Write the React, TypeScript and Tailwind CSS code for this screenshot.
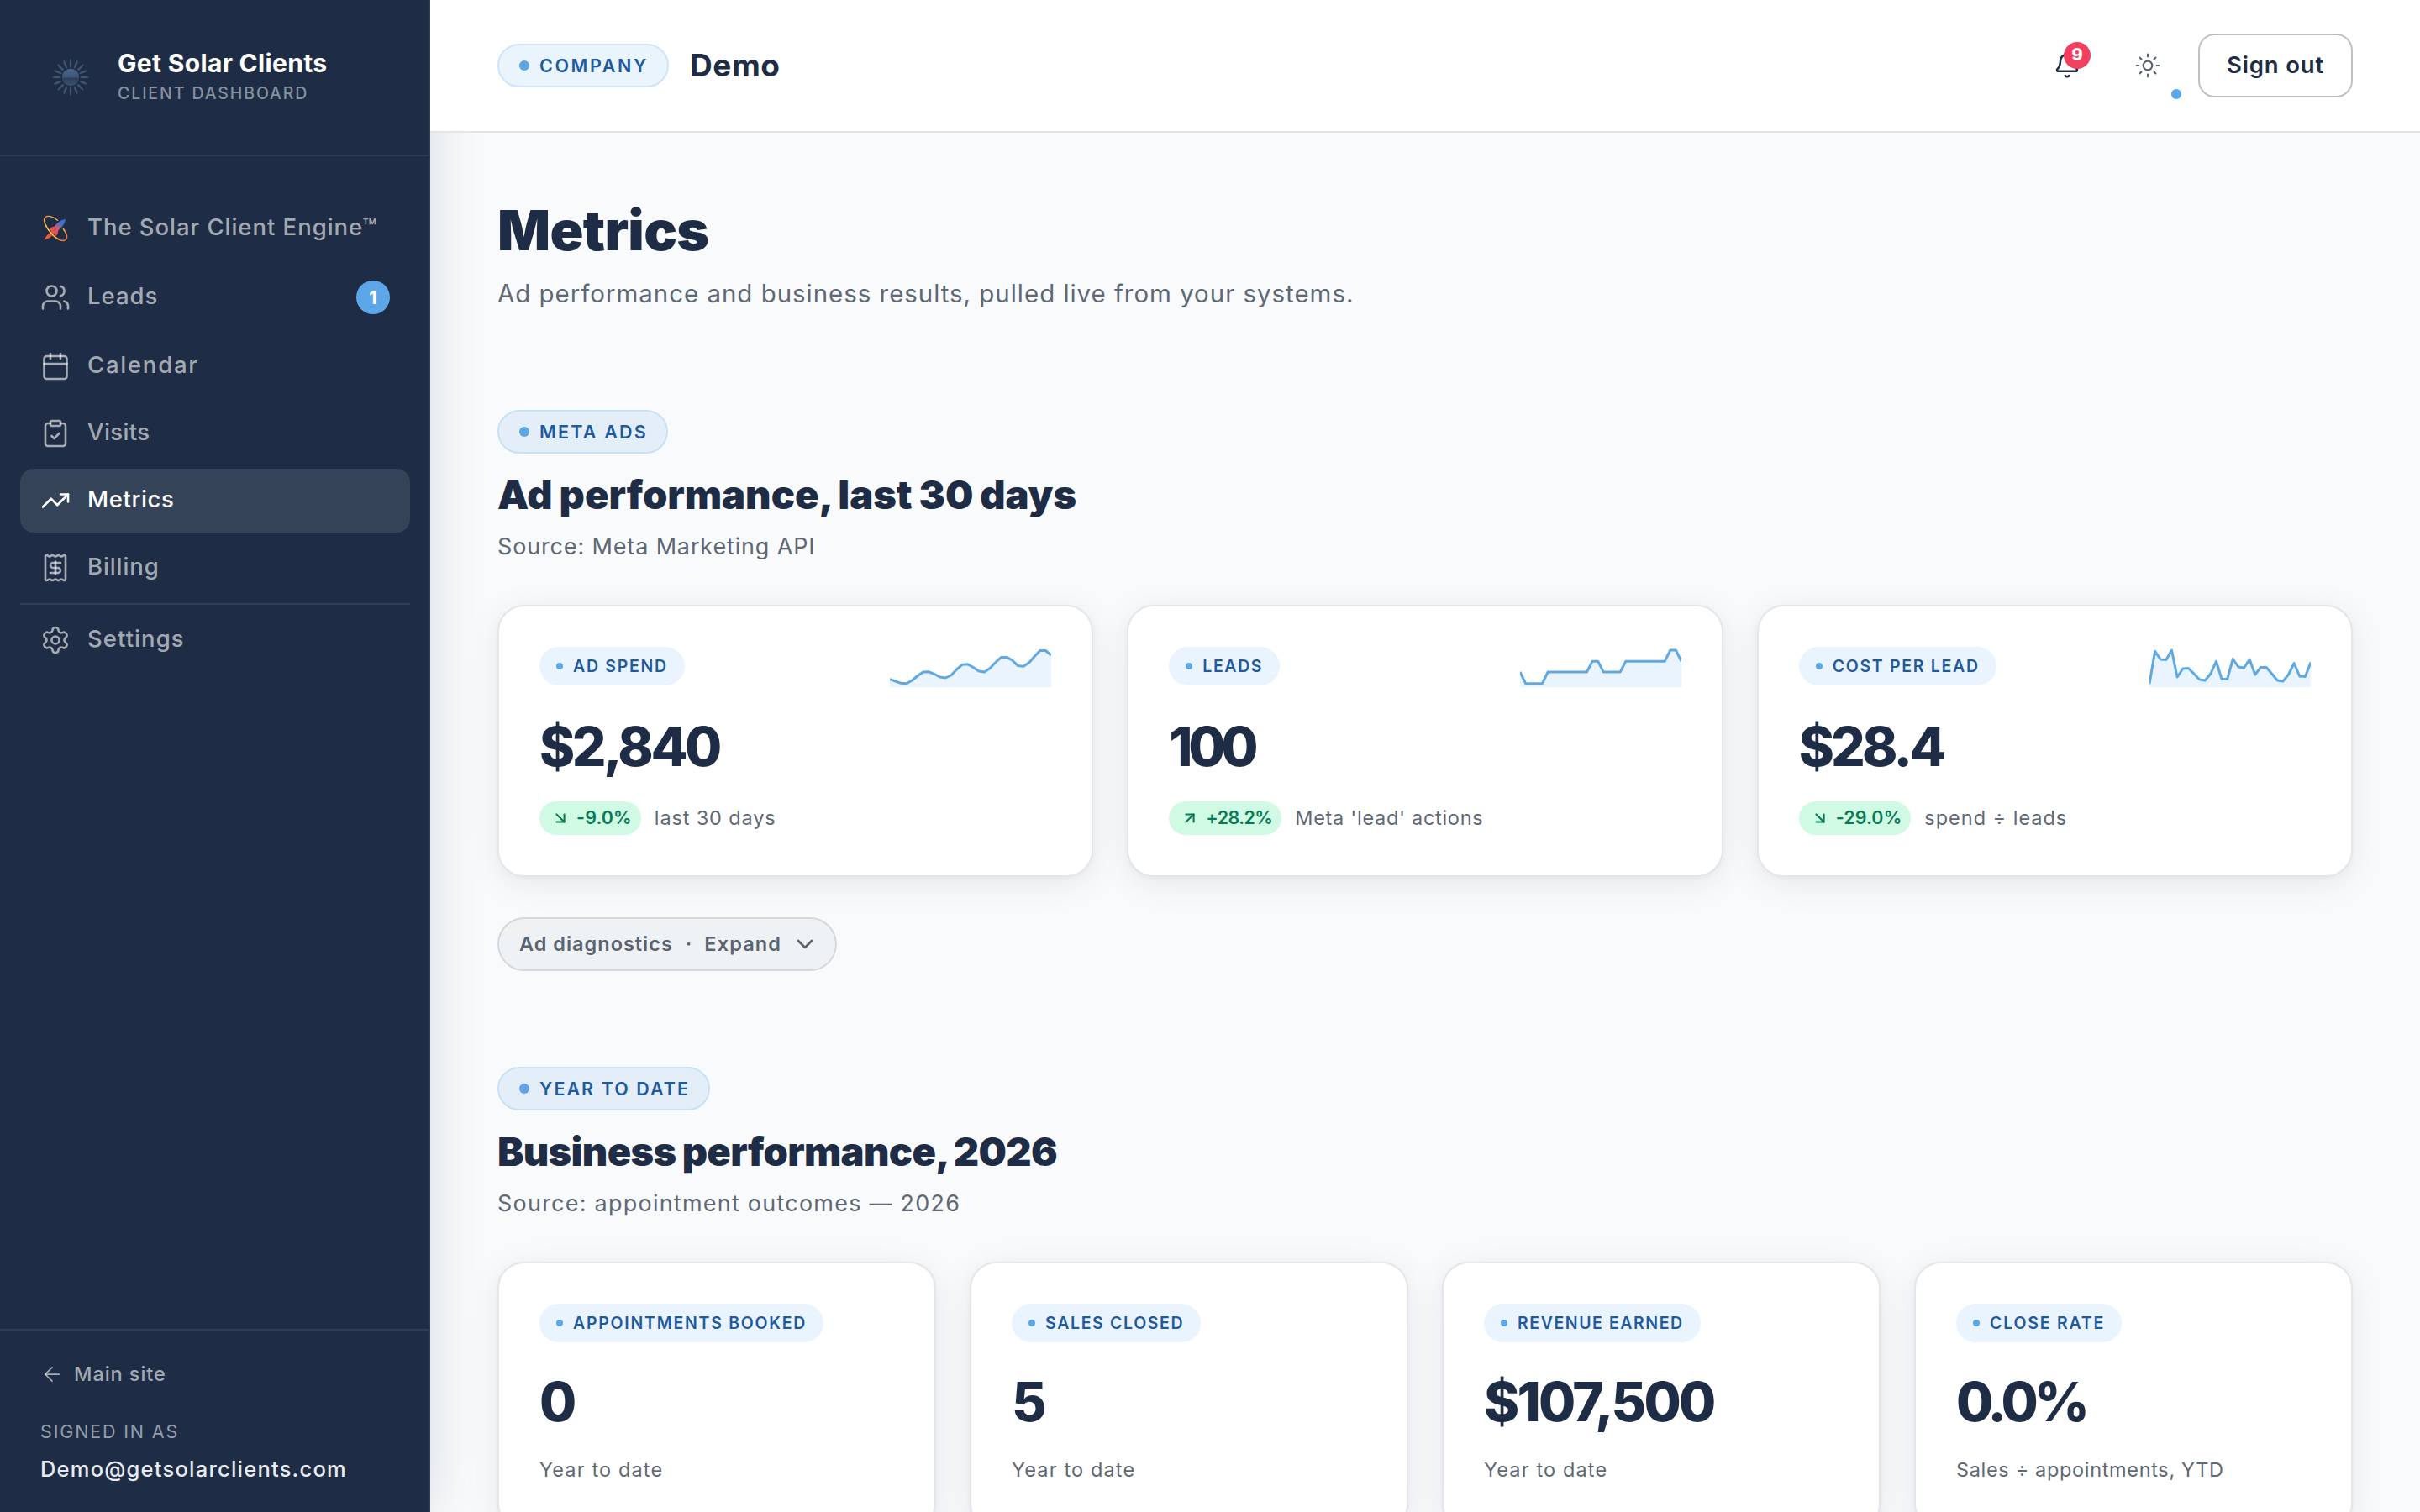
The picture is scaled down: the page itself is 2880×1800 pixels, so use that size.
import React from "react";
import {
  ArrowDownRight,
  ArrowLeft,
  ArrowUpRight,
  Bell,
  Calendar,
  ChevronDown,
  ClipboardCheck,
  Settings,
  Sun,
  TrendingUp,
  Users,
} from "lucide-react";

const spendTrend = [
  38.6, 41, 43.3, 43.7, 40, 34.5, 30, 29.8, 32.5, 36, 37, 34, 27, 21.3, 20.8, 24.5, 29, 30, 25.6, 18.5, 12.6, 12.4, 16,
  22.5, 23.2, 19, 11.5, 4.5, 4.5, 10,
];
const leadsTrend = [
  30, 43.7, 43.7, 43.7, 43.7, 30, 30, 30, 30, 30, 30, 30, 30, 17.3, 17.3, 30, 30, 30, 30, 17.3, 17.3, 17.3, 17.3, 17.3,
  17.3, 17.3, 17.3, 4, 4, 17.3,
];
const costTrend = [
  44, 5.3, 15, 15.5, 4, 36, 26, 25.5, 32, 39, 40, 32, 17.3, 38.5, 38.5, 14.5, 24, 25, 15, 33, 24.5, 24.5, 32, 40, 41, 33,
  19.5, 35, 35.5, 18.5,
];

function SunLogo() {
  return (
    <svg viewBox="0 0 48 48" className="mt-[13px] size-12 shrink-0">
      <defs>
        <linearGradient id="sunCore" x1="0" y1="0" x2="0" y2="1">
          <stop offset="0" stopColor="#4a6488" />
          <stop offset="0.48" stopColor="#3f587a" />
          <stop offset="0.56" stopColor="#2c405d" />
          <stop offset="1" stopColor="#3a5070" />
        </linearGradient>
      </defs>
      {Array.from({ length: 16 }, (_, i) => (
        <path
          key={i}
          d="M23.2 12.4 Q21.8 6.5 24 1.2 Q26.2 6.5 24.8 12.4 Z"
          fill="#42556f"
          transform={`rotate(${i * 22.5} 24 24)`}
        />
      ))}
      <circle cx="24" cy="24" r="10.2" fill="url(#sunCore)" />
    </svg>
  );
}

function RocketIcon() {
  return (
    <svg viewBox="0 0 36 36" className="size-9 shrink-0" fill="none">
      <defs>
        <linearGradient id="ring" x1="6" y1="4" x2="31" y2="33" gradientUnits="userSpaceOnUse">
          <stop offset="0" stopColor="#f6a63c" />
          <stop offset="0.5" stopColor="#fbc14a" />
          <stop offset="1" stopColor="#f0682f" />
        </linearGradient>
        <linearGradient id="hull" x1="30" y1="6" x2="10" y2="27" gradientUnits="userSpaceOnUse">
          <stop offset="0" stopColor="#1f74d8" />
          <stop offset="0.3" stopColor="#4a6fc4" />
          <stop offset="0.55" stopColor="#d9586a" />
          <stop offset="1" stopColor="#ee4a2c" />
        </linearGradient>
      </defs>
      <path d="M20.5 8.2 C15 3.200 8 2 5.600 5 C3.800 7.500 5 12 7.200 15.500" stroke="url(#ring)" strokeWidth="1.400" strokeLinecap="round" />
      <path d="M30 7 C25 7.500 20.500 10.500 17 15.500 L12.500 16.800 L9.500 21 L13.200 20.800 L12.300 22.600 L15.200 25.200 L16.900 24.200 L17 28 L20.500 24.800 L21.500 20 C26 16.500 29.300 12.500 30 7 Z" fill="url(#hull)" />
      <path d="M11.500 23.500 C8.500 24.500 6.800 27.500 4.500 31.500 C8.500 30.500 12.500 29 14 26 Z" fill="#ee5a35" />
      <path d="M5.500 12.500 C9 20.500 17 29.500 24.500 32 C30 33.600 32.300 30.500 31.200 25.800 C30.400 22.800 29 20.800 27.500 18.800" stroke="url(#ring)" strokeWidth="1.700" strokeLinecap="round" />
    </svg>
  );
}

function ReceiptIcon() {
  return (
    <svg viewBox="0 0 24 24" className="size-9 shrink-0" fill="none" stroke="currentColor" strokeWidth="1.75" strokeLinecap="round" strokeLinejoin="round">
      <path d="M12 17V7" />
      <path d="M16 8h-6a2 2 0 0 0 0 4h4a2 2 0 0 1 0 4H8" />
      <path d="M4 3a1 1 0 0 1 1-1 1.3 1.3 0 0 1 .7.2l.933.6a1.3 1.3 0 0 0 1.4 0l.934-.6a1.3 1.3 0 0 1 1.4 0l.933.6a1.3 1.3 0 0 0 1.4 0l.933-.6a1.3 1.3 0 0 1 1.4 0l.934.6a1.3 1.3 0 0 0 1.4 0l.933-.6A1.3 1.3 0 0 1 19 2a1 1 0 0 1 1 1v18a1 1 0 0 1-1 1 1.3 1.3 0 0 1-.7-.2l-.933-.6a1.3 1.3 0 0 0-1.4 0l-.934.6a1.3 1.3 0 0 1-1.4 0l-.933-.6a1.3 1.3 0 0 0-1.4 0l-.933.6a1.3 1.3 0 0 1-1.4 0l-.934-.6a1.3 1.3 0 0 0-1.4 0l-.933.6a1.3 1.3 0 0 1-.7.2 1 1 0 0 1-1-1z" />
    </svg>
  );
}

type NavItemProps = {
  icon: React.ReactNode;
  label: string;
  spacing: string;
  active?: boolean;
  badge?: string;
};

function NavItem({ icon, label, spacing, active, badge }: NavItemProps) {
  return (
    <a
      className={`flex items-center rounded-[16px] px-6 ${badge ? "h-20" : "h-[76px]"} ${
        active ? "bg-[#344358] text-white" : "text-white/60"
      }`}
    >
      {icon}
      <span className={`ml-5 pb-1 text-[27.5px] font-medium leading-9 ${spacing}`}>{label}</span>
      {badge && (
        <span className="ml-auto flex size-10 items-center justify-center rounded-full bg-[#5ba7e8] text-[22px] font-extrabold leading-none text-white">
          {badge}
        </span>
      )}
    </a>
  );
}

function Sidebar() {
  return (
    <aside className="z-10 flex h-full w-[512px] shrink-0 flex-col border-r-2 border-[#2b3a52] bg-[#1e2d45] shadow-[0_0_64px_rgba(16,24,32,0.13)]">
      <div className="flex h-[186px] shrink-0 gap-8 border-b-2 border-[#2e3d55] pl-[60px] pt-[55px]">
        <SunLogo />
        <div>
          <div className="h-10 text-[30px] font-bold leading-10 tracking-[0.32px] text-white">Get Solar Clients</div>
          <div className="mt-0.5 text-[19.5px] font-medium leading-7 tracking-[1.9px] text-[#8590a0]">CLIENT DASHBOARD</div>
        </div>
      </div>
      <nav className="flex flex-col gap-1 pl-6 pr-[22px] pt-12">
        <NavItem icon={<RocketIcon />} label="The Solar Client Engine™" spacing="tracking-[0.96px]" />
        <NavItem icon={<Users className="size-9" strokeWidth={1.75} />} label="Leads" spacing="tracking-[1px]" badge="1" />
        <NavItem icon={<Calendar className="size-9" strokeWidth={1.75} />} label="Calendar" spacing="tracking-[1.75px]" />
        <NavItem icon={<ClipboardCheck className="size-9" strokeWidth={1.75} />} label="Visits" spacing="tracking-[0.4px]" />
        <NavItem icon={<TrendingUp className="size-9" strokeWidth={1.75} />} label="Metrics" spacing="tracking-[0.6px]" active />
        <NavItem icon={<ReceiptIcon />} label="Billing" spacing="tracking-[0.9px]" />
        <div className="h-0.5 bg-[#2f3f57]" />
        <NavItem icon={<Settings className="size-9" strokeWidth={1.75} />} label="Settings" spacing="tracking-[1.05px]" />
      </nav>
      <div className="mt-auto border-t-2 border-[#2e3d55] px-12 pb-[31px] pt-8">
        <a className="flex h-10 items-center gap-3 text-white/60">
          <ArrowLeft className="size-7" strokeWidth={1.5} />
          <span className="text-[23.5px] font-medium leading-10 tracking-[0.95px]">Main site</span>
        </a>
        <div className="mt-[33px] text-[21.5px] leading-[30px] tracking-[1.85px] text-[#939dab]">SIGNED IN AS</div>
        <div className="mt-2.5 text-[25.5px] font-medium leading-10 tracking-[1.22px] text-[#e8ebef]">
          Demo@getsolarclients.com
        </div>
      </div>
    </aside>
  );
}

function SectionPill({ label, spacing, tone }: { label: string; spacing: string; tone: string }) {
  return (
    <div className={`flex h-[52px] w-fit items-center gap-3 rounded-full border-2 pl-6 pr-[22px] ${tone}`}>
      <span className="size-3 rounded-full bg-[#5ba7e8]" />
      <span className={`pt-0.5 text-[21.5px] font-semibold leading-none text-[#1f5a9f] ${spacing}`}>{label}</span>
    </div>
  );
}

function CardPill({ label, spacing }: { label: string; spacing: string }) {
  return (
    <div className="flex h-[46px] w-fit items-center gap-3 rounded-full bg-[#e9f4fe] px-5">
      <span className="size-2 rounded-full bg-[#5ba7e8]" />
      <span className={`whitespace-nowrap pt-0.5 text-[19.5px] font-semibold leading-none text-[#1f5a9f] ${spacing}`}>
        {label}
      </span>
    </div>
  );
}

function Sparkline({ data }: { data: number[] }) {
  const line = data.map((y, i) => `${((i * 192) / (data.length - 1)).toFixed(2)},${y}`).join(" ");
  return (
    <svg viewBox="0 0 192 48" className="h-12 w-48 shrink-0" fill="none">
      <polygon points={`0,48 ${line} 192,48`} fill="#e9f4fe" />
      <polyline points={line} stroke="#5fa8e3" strokeWidth="3" strokeLinejoin="round" />
    </svg>
  );
}

const cardBox =
  "rounded-[32px] border-2 border-[#e4e7e9] bg-white p-12 shadow-[0_8px_40px_rgba(16,24,40,0.08),0_2px_6px_rgba(16,24,40,0.03)]";

type TrendCardProps = {
  label: string;
  labelSpacing: string;
  value: string;
  valueSpacing: string;
  delta: string;
  deltaSpacing: string;
  up?: boolean;
  note: string;
  noteSpacing: string;
  data: number[];
};

function TrendCard(p: TrendCardProps) {
  const Arrow = p.up ? ArrowUpRight : ArrowDownRight;
  return (
    <div className={cardBox}>
      <div className="flex h-12 items-start justify-between">
        <CardPill label={p.label} spacing={p.labelSpacing} />
        <Sparkline data={p.data} />
      </div>
      <div className={`mt-[39px] text-[64px] font-extrabold leading-none text-[#1e2d45] ${p.valueSpacing}`}>{p.value}</div>
      <div className="mt-[33px] flex h-10 items-center gap-4">
        <span className="flex h-10 items-center gap-2 rounded-full bg-[#d1fae5] pl-3.5 pr-[11px] text-[#067a55]">
          <Arrow className="size-[22px]" strokeWidth={2.25} />
          <span className={`text-[21.5px] font-semibold leading-none ${p.deltaSpacing}`}>{p.delta}</span>
        </span>
        <span className={`text-[23.5px] leading-none text-[#5f6875] ${p.noteSpacing}`}>{p.note}</span>
      </div>
    </div>
  );
}

type YearCardProps = {
  label: string;
  labelSpacing: string;
  value: string;
  valueSpacing: string;
  note: string;
  noteSpacing: string;
};

function YearCard(p: YearCardProps) {
  return (
    <div className={`${cardBox} h-80`}>
      <CardPill label={p.label} spacing={p.labelSpacing} />
      <div className={`mt-[39px] text-[64px] font-extrabold leading-none text-[#1e2d45] ${p.valueSpacing}`}>{p.value}</div>
      <div className={`mt-[29px] text-[23.5px] leading-10 text-[#5f6875] ${p.noteSpacing}`}>{p.note}</div>
    </div>
  );
}

function TopBar() {
  return (
    <header className="relative z-20 flex h-[158px] shrink-0 items-center border-b-2 border-[#e2e4e6] bg-white px-20">
      <SectionPill label="COMPANY" spacing="tracking-[2.62px]" tone="bg-[#e9f4fd] border-[#cfe4f8]" />
      <span className="ml-[25px] pb-0.5 text-[37px] font-bold leading-none tracking-[0.6px] text-[#1e2d45]">Demo</span>
      <div className="ml-auto flex items-center">
        <div className="relative flex size-16 items-center justify-center text-[#1e2d45]">
          <Bell className="size-8" strokeWidth={1.9} />
          <span className="absolute left-7 top-1 flex size-8 items-center justify-center rounded-full bg-[#f43f5e] pb-0.5 text-[20px] font-extrabold leading-none text-white">
            9
          </span>
        </div>
        <div className="relative ml-8 flex size-16 items-center justify-center text-[#58626f]">
          <Sun className="size-8" strokeWidth={1.6} />
          <span className="absolute -bottom-2 -right-2 size-3 rounded-full bg-[#5ba7e8]" />
        </div>
        <button className="ml-7 flex h-[76px] w-[184px] items-center justify-center rounded-[20px] border-2 border-[#bfc2c5] bg-white text-[27.5px] font-semibold leading-none tracking-[0.83px] text-[#1e2d45]">
          Sign out
        </button>
      </div>
    </header>
  );
}

export default function App() {
  return (
    <div className="flex h-[1800px] w-[2880px] overflow-hidden bg-[#f8fafc] font-['Inter',sans-serif]">
      <Sidebar />
      <div className="flex min-w-0 flex-1 flex-col">
        <TopBar />
        <main className="flex min-h-0 flex-1 flex-col overflow-hidden px-20">
          <h1 className="mt-[76px] shrink-0 text-[66px] font-black leading-[80px] tracking-[-0.7px] text-[#1e2d45]">Metrics</h1>
          <p className="mt-[11px] shrink-0 text-[29.5px] leading-[48px] tracking-[0.96px] text-[#5f6875]">
            Ad performance and business results, pulled live from your systems.
          </p>

          <section className="mt-[115px] shrink-0">
            <SectionPill label="META ADS" spacing="tracking-[2.2px]" tone="bg-[#e4eef9] border-[#c9e1f5]" />
            <h2 className="mt-[19px] text-[47px] font-black leading-[60px] tracking-[0px] text-[#1e2d45] [word-spacing:-1.5px]">
              Ad performance, last 30 days
            </h2>
            <p className="mt-3 text-[27px] leading-10 tracking-[0.85px] text-[#5f6875]">Source: Meta Marketing API</p>
            <div className="mt-[49px] grid grid-cols-3 gap-10">
              <TrendCard
                label="AD SPEND"
                labelSpacing="tracking-[1.7px]"
                value="$2,840"
                valueSpacing="tracking-[-3.44px]"
                delta="-9.0%"
                deltaSpacing="tracking-[0.13px]"
                note="last 30 days"
                noteSpacing="tracking-[0.86px]"
                data={spendTrend}
              />
              <TrendCard
                label="LEADS"
                labelSpacing="tracking-[1.6px]"
                value="100"
                valueSpacing="tracking-[-5.27px]"
                delta="+28.2%"
                deltaSpacing="tracking-[-0.6px]"
                up
                note="Meta 'lead' actions"
                noteSpacing="tracking-[0.7px]"
                data={leadsTrend}
              />
              <TrendCard
                label="COST PER LEAD"
                labelSpacing="tracking-[1.7px]"
                value="$28.4"
                valueSpacing="tracking-[-3.8px]"
                delta="-29.0%"
                deltaSpacing="tracking-[0.11px]"
                note="spend ÷ leads"
                noteSpacing="tracking-[0.98px]"
                data={costTrend}
              />
            </div>
            <button className="mt-12 flex h-16 items-center rounded-full border-2 border-[#d5d9dc] bg-[#eef2f5] pl-6 pr-5 text-[23.5px] font-semibold leading-none text-[#5a6471]">
              <span className="tracking-[0.99px]">Ad diagnostics</span>
              <span className="mx-[15px]">·</span>
              <span className="tracking-[1.13px]">Expand</span>
              <ChevronDown className="ml-3 size-8" strokeWidth={2} />
            </button>
          </section>

          <section className="mt-[114px] shrink-0">
            <SectionPill label="YEAR TO DATE" spacing="tracking-[2.04px]" tone="bg-[#e4eef9] border-[#c9e1f5]" />
            <h2 className="mt-[19px] text-[47px] font-black leading-[60px] tracking-[-0.66px] text-[#1e2d45] [word-spacing:-1.5px]">
              Business performance, 2026
            </h2>
            <p className="mt-3 text-[27px] leading-10 tracking-[1.23px] text-[#5f6875]">
              Source: appointment outcomes — 2026
            </p>
            <div className="mt-[49px] grid grid-cols-4 gap-10">
              <YearCard
                label="APPOINTMENTS BOOKED"
                labelSpacing="tracking-[1.75px]"
                value="0"
                valueSpacing="tracking-normal"
                note="Year to date"
                noteSpacing="tracking-[1.14px]"
              />
              <YearCard
                label="SALES CLOSED"
                labelSpacing="tracking-[1.65px]"
                value="5"
                valueSpacing="tracking-normal"
                note="Year to date"
                noteSpacing="tracking-[1.14px]"
              />
              <YearCard
                label="REVENUE EARNED"
                labelSpacing="tracking-[1.56px]"
                value="$107,500"
                valueSpacing="tracking-[-2.79px]"
                note="Year to date"
                noteSpacing="tracking-[1.14px]"
              />
              <YearCard
                label="CLOSE RATE"
                labelSpacing="tracking-[1.8px]"
                value="0.0%"
                valueSpacing="tracking-[-4.73px]"
                note="Sales ÷ appointments, YTD"
                noteSpacing="tracking-[0.66px]"
              />
            </div>
          </section>
        </main>
      </div>
    </div>
  );
}
